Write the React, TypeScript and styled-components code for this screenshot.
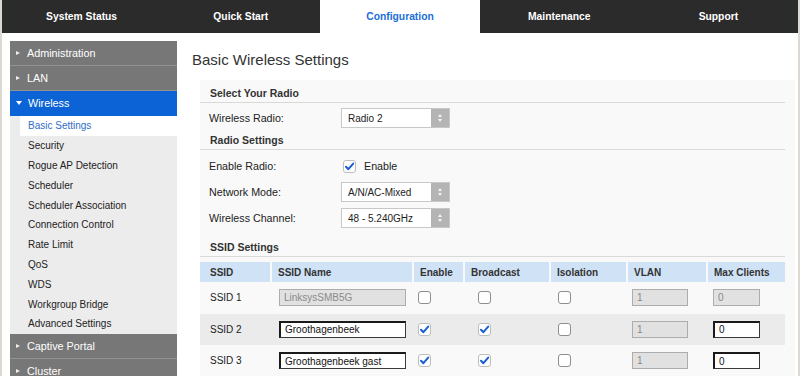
import styled, { createGlobalStyle } from "styled-components";

const GlobalStyle = createGlobalStyle`
  html, body {
    margin: 0;
    padding: 0;
  }
  body {
    background: #ddd9d2;
    font-family: "Liberation Sans", Arial, sans-serif;
    color: #222;
    overflow: hidden;
  }
`;

const Page = styled.div`
  margin: 0 2px;
  height: 376px;
  background: #fff;
  overflow: hidden;
`;

const TopNav = styled.nav`
  display: flex;
  height: 33px;
  background: #2b2b2b;
`;

const Tab = styled.div<{ $active?: boolean }>`
  flex: 1;
  display: flex;
  align-items: center;
  justify-content: center;
  font-size: 10.3px;
  font-weight: bold;
  color: ${(p) => (p.$active ? "#1b6fd6" : "#fff")};
  background: ${(p) => (p.$active ? "#fff" : "transparent")};
`;

const Body = styled.div`
  display: flex;
  align-items: flex-start;
`;

const Sidebar = styled.aside`
  flex: none;
  width: 167px;
  margin: 8px 0 0 8px;
`;

const MenuHeader = styled.div<{ $open?: boolean }>`
  height: 24px;
  display: flex;
  align-items: center;
  gap: 6px;
  padding-left: 6px;
  font-size: 10.8px;
  color: #fff;
  background: ${(p) => (p.$open ? "#0b63d5" : "#777")};
  border-bottom: 1px solid ${(p) => (p.$open ? "#0b63d5" : "#929292")};
`;

const Caret = styled.span<{ $open?: boolean }>`
  width: 0;
  height: 0;
  ${(p) =>
    p.$open
      ? `border-left: 3px solid transparent;
         border-right: 3px solid transparent;
         border-top: 4px solid #fff;`
      : `border-top: 2.5px solid transparent;
         border-bottom: 2.5px solid transparent;
         border-left: 4px solid #eee;
         margin-right: 1px;`}
`;

const SubMenu = styled.div`
  background: #ececec;
  padding-left: 10px;
`;

const SubItem = styled.div<{ $active?: boolean }>`
  height: 19.8px;
  display: flex;
  align-items: center;
  padding-left: 8px;
  font-size: 10px;
  color: ${(p) => (p.$active ? "#2f6ec5" : "#222")};
  background: ${(p) => (p.$active ? "#fff" : "transparent")};
`;

const Main = styled.main`
  flex: 1;
  margin-left: 15px;
`;

const Title = styled.h1`
  margin: 18px 0 0 0;
  font-size: 15px;
  line-height: 18px;
  font-weight: normal;
  color: #333;
`;

const Panel = styled.section`
  margin: 11px 4px 0 8px;
  padding: 4px 10px 0 0;
  height: 300px;
  background: #f9f9f9;
`;

const SectionTitle = styled.div<{ $gap?: number }>`
  height: 18px;
  line-height: 18px;
  margin-top: ${(p) => p.$gap ?? 0}px;
  padding-left: 10px;
  font-size: 10.5px;
  font-weight: bold;
  color: #333;
  border-bottom: 1px solid #d9d9d9;
`;

const Rows = styled.div<{ $top?: number }>`
  padding-top: ${(p) => p.$top ?? 2}px;
`;

const FormRow = styled.div`
  height: 26px;
  display: flex;
  align-items: center;
  padding-left: 9px;
  font-size: 10.7px;
  color: #222;
`;

const Label = styled.span`
  width: 132px;
  flex: none;
`;

const Select = styled.div`
  width: 109px;
  height: 20px;
  box-sizing: border-box;
  display: flex;
  border: 1px solid #c8c8c8;
  background: #fff;
  font-size: 10px;
  color: #222;
`;

const SelectValue = styled.span`
  flex: 1;
  display: flex;
  align-items: center;
  padding-left: 6px;
`;

const SelectButton = styled.span`
  width: 18px;
  display: flex;
  flex-direction: column;
  align-items: center;
  justify-content: center;
  gap: 2px;
  background: #b4b4b4;
`;

const Arrow = styled.span<{ $up?: boolean }>`
  width: 0;
  height: 0;
  border-left: 2.5px solid transparent;
  border-right: 2.5px solid transparent;
  ${(p) =>
    p.$up ? "border-bottom: 3px solid #f4f4f4;" : "border-top: 3px solid #f4f4f4;"}
`;

const CheckLabel = styled.span`
  display: flex;
  align-items: center;
  gap: 8px;
  margin-left: 2px;
`;

const Box = styled.span<{ $checked?: boolean }>`
  flex: none;
  display: inline-flex;
  align-items: center;
  justify-content: center;
  width: 13px;
  height: 13px;
  box-sizing: border-box;
  border: 1px solid ${(p) => (p.$checked ? "#bdbdbd" : "#8e8e8e")};
  border-radius: 3px;
  background: #fff;
  vertical-align: middle;
`;

const Table = styled.table`
  width: 100%;
  margin-top: 5px;
  border-collapse: collapse;
  table-layout: fixed;
  font-size: 10px;
`;

const Th = styled.th<{ $first?: boolean }>`
  height: 20px;
  padding: 0 0 0 ${(p) => (p.$first ? 10 : 6)}px;
  text-align: left;
  font-weight: bold;
  color: #333;
  background: #cfe2f6;
  border-right: 2px solid #f9f9f9;
  &:last-child {
    border-right: none;
  }
`;

const Tr = styled.tr<{ $shaded?: boolean }>`
  height: 31.5px;
  background: ${(p) => (p.$shaded ? "#ebebeb" : "transparent")};
`;

const Td = styled.td<{ $indent?: number }>`
  padding: 0 0 0 ${(p) => p.$indent ?? 6}px;
  color: #222;
`;

const TextInput = styled.input<{ $w: number }>`
  display: block;
  width: ${(p) => p.$w}px;
  height: 17px;
  box-sizing: border-box;
  padding: 0 4px;
  font: 10px "Liberation Sans", Arial, sans-serif;
  color: #111;
  background: #fff;
  border-style: solid;
  border-width: 2px 1px 1px 2px;
  border-color: #1a1a1a #3a3a3a #3a3a3a #1a1a1a;
  outline: none;
  &:disabled {
    background: #e1e1e1;
    color: #8a8a8a;
    border: 1px solid #adadad;
  }
`;

const Check = ({ checked }: { checked?: boolean }) => (
  <Box $checked={checked}>
    {checked ? (
      <svg width="11" height="11" viewBox="0 0 11 11">
        <path d="M2 5.8 L4.4 8.2 L9.2 2.6" fill="none" stroke="#1c5fd0" strokeWidth="2" strokeLinecap="round" strokeLinejoin="round" />
      </svg>
    ) : null}
  </Box>
);

const Dropdown = ({ value }: { value: string }) => (
  <Select>
    <SelectValue>{value}</SelectValue>
    <SelectButton>
      <Arrow $up />
      <Arrow />
    </SelectButton>
  </Select>
);

const tabs = ["System Status", "Quick Start", "Configuration", "Maintenance", "Support"];

const wirelessItems = [
  "Basic Settings",
  "Security",
  "Rogue AP Detection",
  "Scheduler",
  "Scheduler Association",
  "Connection Control",
  "Rate Limit",
  "QoS",
  "WDS",
  "Workgroup Bridge",
  "Advanced Settings",
];

type Ssid = {
  id: string;
  name: string;
  enabled: boolean;
  broadcast: boolean;
  isolation: boolean;
  vlan: string;
  maxClients: string;
  locked?: boolean;
};

const ssids: Ssid[] = [
  { id: "SSID 1", name: "LinksysSMB5G", enabled: false, broadcast: false, isolation: false, vlan: "1", maxClients: "0", locked: true },
  { id: "SSID 2", name: "Groothagenbeek", enabled: true, broadcast: true, isolation: false, vlan: "1", maxClients: "0" },
  { id: "SSID 3", name: "Groothagenbeek gast", enabled: true, broadcast: true, isolation: false, vlan: "1", maxClients: "0" },
];

export default function App() {
  return (
    <>
      <GlobalStyle />
      <Page>
        <TopNav>
          {tabs.map((t) => (
            <Tab key={t} $active={t === "Configuration"}>
              {t}
            </Tab>
          ))}
        </TopNav>
        <Body>
          <Sidebar>
            <MenuHeader>
              <Caret />
              Administration
            </MenuHeader>
            <MenuHeader>
              <Caret />
              LAN
            </MenuHeader>
            <MenuHeader $open>
              <Caret $open />
              Wireless
            </MenuHeader>
            <SubMenu>
              {wirelessItems.map((item) => (
                <SubItem key={item} $active={item === "Basic Settings"}>
                  {item}
                </SubItem>
              ))}
            </SubMenu>
            <MenuHeader>
              <Caret />
              Captive Portal
            </MenuHeader>
            <MenuHeader>
              <Caret />
              Cluster
            </MenuHeader>
          </Sidebar>
          <Main>
            <Title>Basic Wireless Settings</Title>
            <Panel>
              <SectionTitle>Select Your Radio</SectionTitle>
              <Rows>
                <FormRow>
                  <Label>Wireless Radio:</Label>
                  <Dropdown value="Radio 2" />
                </FormRow>
              </Rows>
              <SectionTitle>Radio Settings</SectionTitle>
              <Rows $top={3}>
                <FormRow>
                  <Label>Enable Radio:</Label>
                  <CheckLabel>
                    <Check checked />
                    Enable
                  </CheckLabel>
                </FormRow>
                <FormRow>
                  <Label>Network Mode:</Label>
                  <Dropdown value="A/N/AC-Mixed" />
                </FormRow>
                <FormRow>
                  <Label>Wireless Channel:</Label>
                  <Dropdown value="48 - 5.240GHz" />
                </FormRow>
              </Rows>
              <SectionTitle $gap={7}>SSID Settings</SectionTitle>
              <Table>
                <colgroup>
                  <col style={{ width: 71 }} />
                  <col style={{ width: 142 }} />
                  <col style={{ width: 51 }} />
                  <col style={{ width: 86 }} />
                  <col style={{ width: 77 }} />
                  <col style={{ width: 80 }} />
                  <col style={{ width: 78 }} />
                </colgroup>
                <thead>
                  <tr>
                    <Th $first>SSID</Th>
                    <Th>SSID Name</Th>
                    <Th>Enable</Th>
                    <Th>Broadcast</Th>
                    <Th>Isolation</Th>
                    <Th>VLAN</Th>
                    <Th>Max Clients</Th>
                  </tr>
                </thead>
                <tbody>
                  {ssids.map((s, i) => (
                    <Tr key={s.id} $shaded={i % 2 === 1}>
                      <Td $indent={10}>{s.id}</Td>
                      <Td $indent={8}>
                        <TextInput $w={127} defaultValue={s.name} disabled={s.locked} />
                      </Td>
                      <Td $indent={5}>
                        <Check checked={s.enabled} />
                      </Td>
                      <Td $indent={14}>
                        <Check checked={s.broadcast} />
                      </Td>
                      <Td $indent={8}>
                        <Check checked={s.isolation} />
                      </Td>
                      <Td $indent={5}>
                        <TextInput $w={56} defaultValue={s.vlan} disabled />
                      </Td>
                      <Td $indent={6}>
                        <TextInput $w={47} defaultValue={s.maxClients} disabled={s.locked} />
                      </Td>
                    </Tr>
                  ))}
                </tbody>
              </Table>
            </Panel>
          </Main>
        </Body>
      </Page>
    </>
  );
}
